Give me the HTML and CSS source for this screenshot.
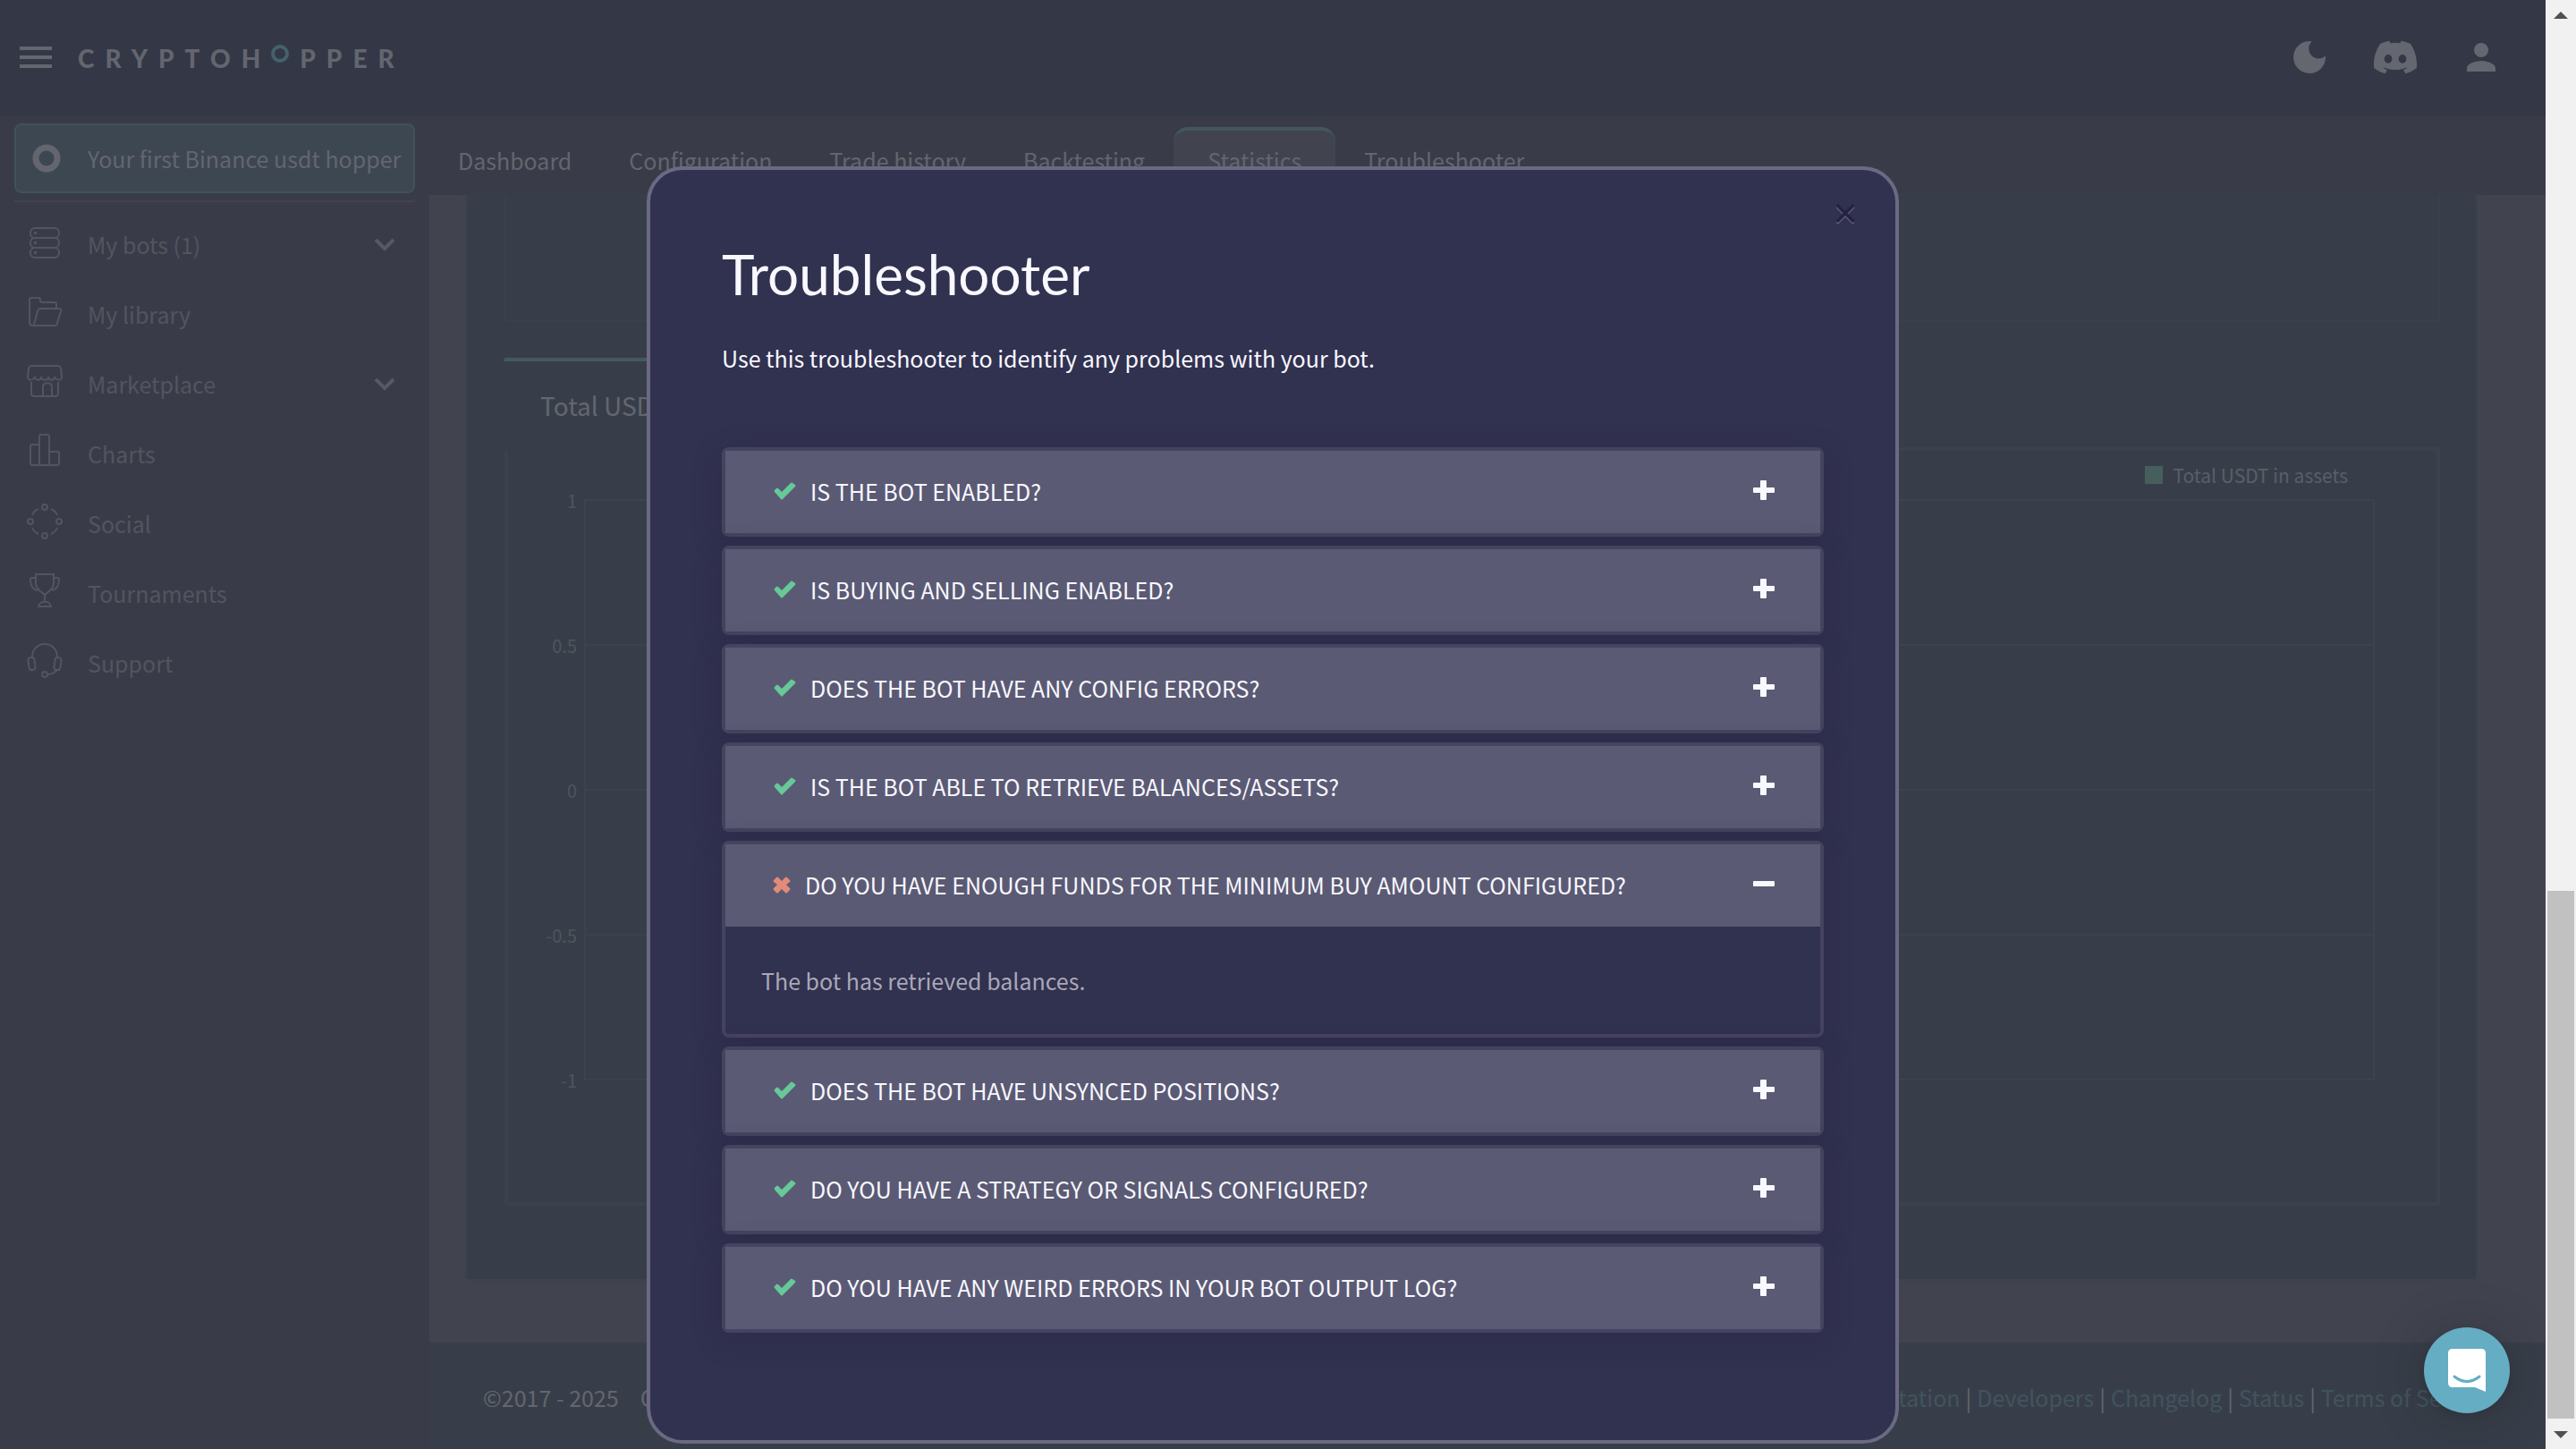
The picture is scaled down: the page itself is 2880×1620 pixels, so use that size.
FILE: index.html
```html
<!DOCTYPE html>
<html lang="en">
<head>
<meta charset="utf-8">
<title>Cryptohopper - Statistics</title>
<link rel="stylesheet" href="styles.css">
</head>
<body>
<header class="topbar">
  <button class="icon-btn menu-btn" aria-label="Menu"><svg width="36" height="24" viewBox="0 0 36 24"><path d="M0 0h36v4H0zM0 10h36v4H0zM0 20h36v4H0z"/></svg></button>
  <a class="logo" href="#">CRYPTOH<svg class="logo-ring" width="20" height="20" viewBox="0 0 20 20" aria-label="O"><circle cx="10" cy="10" r="8"/></svg>PPER</a>
  <div class="top-actions">
    <button class="icon-btn" aria-label="Dark mode"><svg width="48" height="48" viewBox="0 0 48 48"><path d="M26.800 6.200A18 18 0 1 0 42 22.500A11 11 0 1 1 26.800 6.200z"/></svg></button>
    <button class="icon-btn" aria-label="Discord"><svg width="48" height="48" viewBox="0 0 24 24"><path d="M20.317 4.370a19.800 19.800 0 0 0-4.885-1.515.07.07 0 0 0-.079.037c-.21.375-.444.864-.608 1.250a18.300 18.300 0 0 0-5.487 0 12.600 12.600 0 0 0-.617-1.250.08.08 0 0 0-.079-.037A19.700 19.700 0 0 0 3.677 4.370a.07.07 0 0 0-.032.027C.533 9.046-.32 13.580.099 18.057a.08.08 0 0 0 .031.057 19.900 19.900 0 0 0 5.993 3.030.08.08 0 0 0 .084-.028 14 14 0 0 0 1.226-1.994.08.08 0 0 0-.041-.106 13 13 0 0 1-1.872-.892.08.08 0 0 1-.008-.128l.372-.292a.07.07 0 0 1 .077-.01c3.928 1.793 8.180 1.793 12.062 0a.07.07 0 0 1 .078.01l.373.292a.08.08 0 0 1-.006.127 12.300 12.300 0 0 1-1.873.892.08.08 0 0 0-.041.107c.36.698.772 1.362 1.225 1.993a.08.08 0 0 0 .084.028 19.800 19.800 0 0 0 6.002-3.030.08.08 0 0 0 .032-.054c.5-5.177-.838-9.674-3.549-13.660a.06.06 0 0 0-.031-.03zM8.020 15.330c-1.183 0-2.157-1.085-2.157-2.419s.955-2.419 2.157-2.419c1.210 0 2.176 1.096 2.157 2.420 0 1.333-.956 2.418-2.157 2.418zm7.975 0c-1.183 0-2.157-1.085-2.157-2.419s.955-2.419 2.157-2.419c1.210 0 2.176 1.096 2.157 2.420 0 1.333-.946 2.418-2.157 2.418z"/></svg></button>
    <button class="icon-btn" aria-label="Account"><svg width="48" height="48" viewBox="0 0 24 24"><path d="M12 12a4 4 0 1 0 0-8 4 4 0 0 0 0 8zm0 2c-2.670 0-8 1.340-8 4v2h16v-2c0-2.660-5.330-4-8-4z"/></svg></button>
  </div>
</header>

<div class="layout">
  <aside class="sidebar">
    <button class="bot-btn">
      <svg class="side-icon" viewBox="0 0 48 48"><circle cx="26" cy="24" r="12" stroke-width="7"/></svg>
      <span>Your first Binance usdt hopper</span>
    </button>
    <hr class="side-rule">
    <nav class="side-nav">
      <a href="#"><svg class="side-icon" viewBox="0 0 48 48"><rect x="8" y="6" width="32" height="11" rx="5"/><rect x="8" y="17" width="32" height="11" rx="5"/><rect x="8" y="28" width="32" height="11" rx="5"/><path d="M12 11.500h3M12 22.500h3M12 33.500h3" stroke-width="3"/></svg><span>My bots (1)</span><svg class="chevron" viewBox="0 0 24 16"><path d="M2 3l10 10L22 3"/></svg></a>
      <a href="#"><svg class="side-icon" viewBox="0 0 48 48"><path d="M10 37c-2 0-3-1-3-3V8c0-1 1-2 2-2h8c1 0 2 1 2 2v1c0 1 1 2 2 2h14c2 0 2 1 2 2v5M12 36l4-15c1-2 1-3 3-3h21c2 0 3 1 2 3l-4 13c0 2-1 3-3 3H10"/></svg><span>My library</span></a>
      <a href="#"><svg class="side-icon" viewBox="0 0 48 48"><path d="M9 4h30q2 0 3 3l1 9c0 5-6 5-8 0 0 5-7 5-7 0 0 5-8 5-8 0 0 5-7 5-7 0-2 5-8 5-8 0l1-9q1-3 3-3zM9 22v13c0 2 1 3 3 3h24c2 0 3-1 3-3V22M22 38V27c0-5 10-5 10 0v11"/></svg><span>Marketplace</span><svg class="chevron" viewBox="0 0 24 16"><path d="M2 3l10 10L22 3"/></svg></a>
      <a href="#"><svg class="side-icon" viewBox="0 0 48 48"><path d="M18 37V5q0-2 2-2h7q2 0 2 2v32M18 14h-8q-2 0-2 2v19q0 2 2 2h28q2 0 2-2V24q0-2-2-2h-9"/></svg><span>Charts</span></a>
      <a href="#"><svg class="side-icon" viewBox="0 0 48 48"><circle cx="24" cy="6" r="3"/><circle cx="24" cy="38" r="3"/><circle cx="8" cy="22" r="3"/><circle cx="40" cy="22" r="3"/><path d="M31 8q5 2 7 7M17 8q-5 2-7 7M31 36q5-2 7-7M17 36q-5-2-7-7"/></svg><span>Social</span></a>
      <a href="#"><svg class="side-icon" viewBox="0 0 48 48"><path d="M14 3h20v10c0 6-5 9-10 13-5-4-10-7-10-13zM14 7h-4q-2 0-2 2c0 7 3 11 8 12M34 7h4q2 0 2 2c0 7-3 11-8 12M24 26v8M17 39c1-7 13-7 14 0z"/></svg><span>Tournaments</span></a>
      <a href="#"><svg class="side-icon" viewBox="0 0 48 48"><path d="M10 18C10-2 38-2 38 18M38 32c-3 3-6 5-11 5"/><rect x="6" y="18" width="7" height="14" rx="3" transform="rotate(-8 10 25)"/><rect x="35" y="18" width="7" height="14" rx="3" transform="rotate(8 38 25)"/><circle cx="24" cy="37" r="3"/></svg><span>Support</span></a>
    </nav>
  </aside>

  <div class="content">
    <nav class="tabs">
      <a href="#">Dashboard</a>
      <a href="#">Configuration</a>
      <a href="#">Trade history</a>
      <a href="#">Backtesting</a>
      <a href="#" class="active" aria-current="page">Statistics</a>
      <a href="#">Troubleshooter</a>
    </nav>
    <main class="card">
      <section class="panel-end"></section>
      <h2 class="panel-tab">Total USDT in assets</h2>
      <section class="panel">
        <div class="legend"><i></i><span>Total USDT in assets</span></div>
        <div class="plot">
          <div class="axis"><span>1</span><span>0.5</span><span>0</span><span>-0.5</span><span>-1</span></div>
          <div class="grid"><div></div><div></div><div></div><div></div></div>
        </div>
      </section>
    </main>
    <footer class="footer">
      <div class="copyright"><span>©2017 - 2025</span><span>Cryptohopper</span></div>
      <div class="links"><a href="#">Documentation</a><b>|</b><a href="#">Developers</a><b>|</b><a href="#">Changelog</a><b>|</b><a href="#">Status</a><b>|</b><a href="#">Terms of Service</a></div>
    </footer>
  </div>
</div>

<svg class="symbols" aria-hidden="true">
  <symbol id="check" viewBox="0 0 26 20"><path d="M2 9l2-2q1-1 2 0l4 4L20 1q1-1 2 0l3 2q1 1 0 2L11 19q-1 1-2 0L2 11q-1-1 0-2z"/></symbol>
  <symbol id="cross" viewBox="0 0 20 20"><path d="M1 5l3-3q1-1 2 0l4 4 4-4q1-1 2 0l3 3q1 1 0 2l-4 3 4 4q1 1 0 2l-3 3q-1 1-2 0l-4-4-4 4q-1 1-2 0l-3-3q-1-1 0-2l4-4-4-3q-1-1 0-2z"/></symbol>
  <symbol id="plus" viewBox="0 0 24 24"><path d="M8 1q0-1 1-1h5q1 0 1 1v7h8q1 0 1 1v4q0 1-1 1h-8v7q0 1-1 1H9q-1 0-1-1v-7H1q-1 0-1-1V9q0-1 1-1h7z"/></symbol>
  <symbol id="minus" viewBox="0 0 24 24"><rect y="8" width="24" height="6" rx="1"/></symbol>
</svg>

<div class="overlay">
  <div class="modal" role="dialog" aria-labelledby="modal-title">
    <button class="close" aria-label="Close">×</button>
    <h1 id="modal-title">Troubleshooter</h1>
    <p class="intro">Use this troubleshooter to identify any problems with your bot.</p>
    <div class="accordion">
      <div class="item"><button class="question"><svg class="check"><use href="#check"/></svg><span>IS THE BOT ENABLED?</span><svg class="toggle"><use href="#plus"/></svg></button></div>
      <div class="item"><button class="question"><svg class="check"><use href="#check"/></svg><span>IS BUYING AND SELLING ENABLED?</span><svg class="toggle"><use href="#plus"/></svg></button></div>
      <div class="item"><button class="question"><svg class="check"><use href="#check"/></svg><span>DOES THE BOT HAVE ANY CONFIG ERRORS?</span><svg class="toggle"><use href="#plus"/></svg></button></div>
      <div class="item"><button class="question"><svg class="check"><use href="#check"/></svg><span>IS THE BOT ABLE TO RETRIEVE BALANCES/ASSETS?</span><svg class="toggle"><use href="#plus"/></svg></button></div>
      <div class="item"><button class="question" aria-expanded="true"><svg class="cross"><use href="#cross"/></svg><span>DO YOU HAVE ENOUGH FUNDS FOR THE MINIMUM BUY AMOUNT CONFIGURED?</span><svg class="toggle"><use href="#minus"/></svg></button><p class="answer">The bot has retrieved balances.</p></div>
      <div class="item"><button class="question"><svg class="check"><use href="#check"/></svg><span>DOES THE BOT HAVE UNSYNCED POSITIONS?</span><svg class="toggle"><use href="#plus"/></svg></button></div>
      <div class="item"><button class="question"><svg class="check"><use href="#check"/></svg><span>DO YOU HAVE A STRATEGY OR SIGNALS CONFIGURED?</span><svg class="toggle"><use href="#plus"/></svg></button></div>
      <div class="item"><button class="question"><svg class="check"><use href="#check"/></svg><span>DO YOU HAVE ANY WEIRD ERRORS IN YOUR BOT OUTPUT LOG?</span><svg class="toggle"><use href="#plus"/></svg></button></div>
    </div>
  </div>
</div>

<button class="chat" aria-label="Open chat"><svg width="48" height="48" viewBox="0 0 48 48"><path class="bubble" d="M8 0h32q5 0 5 5v43l-12-5H8q-5 0-5-5V5q0-5 5-5z"/><path class="smile" d="M10 31q14 11 28 0"/></svg></button>

<div class="scrollbar" aria-hidden="true">
  <svg viewBox="0 0 34 34"><path d="M9 21l8-8 8 8z"/></svg>
  <div class="track"><div class="thumb"></div></div>
  <svg viewBox="0 0 34 34"><path d="M9 14l8 8 8-8z"/></svg>
</div>
</body>
</html>
```
FILE: styles.css
```css
* { box-sizing: border-box; }

body {
  margin: 0;
  padding-right: 34px;
  min-height: 100vh;
  display: flex;
  flex-direction: column;
  background: #393c48;
  color: #63666f;
  font: 25px/40px "Noto Sans CJK SC", "Noto Sans", sans-serif;
  overflow: hidden;
}

button { font: inherit; color: inherit; background: none; border: 0; padding: 0; cursor: pointer; }
a { color: inherit; text-decoration: none; }
h1, h2, p { margin: 0; font-weight: 400; }
svg { display: block; flex: none; }
.symbols { position: absolute; width: 0; height: 0; }

/* Top bar */
.topbar {
  height: 130px;
  flex: none;
  display: flex;
  align-items: center;
  padding: 0 48px 2px 22px;
  background: #343746;
}
.icon-btn svg { fill: #64676f; }
.menu-btn { margin-right: 29px; }
.logo {
  display: flex;
  align-items: center;
  padding-top: 2px;
  font: 900 28px/32px Lato, sans-serif;
  letter-spacing: 12px;
}
.logo-ring { margin: 0 12px 10px 0; fill: none; stroke: #44616c; stroke-width: 4; }
.top-actions { display: flex; gap: 48px; margin-left: auto; }

/* Layout */
.layout { flex: 1; display: flex; }
.content { flex: 1; min-width: 0; display: flex; flex-direction: column; background: #41444f; }

/* Sidebar */
.sidebar { width: 480px; flex: none; padding: 8px 16px; color: #52555f; }
.bot-btn {
  width: 100%;
  height: 78px;
  display: flex;
  align-items: center;
  gap: 24px;
  padding: 0 8px 0 8px;
  border: 2px solid #3f515c;
  border-radius: 8px;
  background: #3d4752;
  color: #63666f;
  white-space: nowrap;
}
.side-icon { width: 48px; height: 48px; fill: none; stroke: #52555f; stroke-width: 2; }
.bot-btn .side-icon { stroke: #63666f; }
.side-rule { height: 2px; margin: 8px 0; border: 0; background: #40434e; }
.side-nav a { display: flex; align-items: center; gap: 24px; height: 78px; padding: 0 21px 0 10px; }
.chevron { width: 26px; height: 16px; margin-left: auto; fill: none; stroke: #575a64; stroke-width: 4; }

/* Bot tabs */
.tabs {
  height: 88px;
  flex: none;
  display: flex;
  align-items: flex-end;
  background: #393c48;
}
.tabs a { height: 76px; padding: 13px 32px 0; border-top: 4px solid transparent; }
.tabs .active { padding: 13px 38px 0; border-color: #435660; border-radius: 16px 16px 0 0; background: #41444f; }

/* Statistics card */
.card {
  margin: 0 78px 71px 42px;
  padding: 0 40px 82px 42px;
  background: #383e49;
  box-shadow: 0 0 4px #3c404b;
}
.panel-end { height: 142px; border: 2px solid #3b414c; border-top: 0; border-radius: 0 0 4px 4px; }
.panel-tab {
  position: relative;
  width: 420px;
  height: 104px;
  margin: 40px 0 -4px;
  padding: 29px 40px 0;
  border-top: 4px solid #445864;
  background: #383e49;
  font-size: 28px;
  line-height: 40px;
}
.panel { border: 4px solid #3c424d; padding-bottom: 136px; }
.legend {
  display: flex;
  align-items: center;
  justify-content: flex-end;
  gap: 11px;
  height: 54px;
  padding-right: 99px;
  font-size: 21px;
  line-height: 32px;
  color: #5b5e68;
}
.legend i { width: 20px; height: 20px; background: #455f5d; }
.plot { display: flex; margin-right: 69px; }
.axis {
  width: 85px;
  display: flex;
  flex-direction: column;
  justify-content: space-between;
  margin: -14px 0 -16px;
  padding-right: 8px;
  text-align: right;
  font-size: 20px;
  line-height: 32px;
  color: #50545e;
}
.grid { flex: 1; border: solid #3c434b; border-width: 2px 2px 0; }
.grid div { height: 162px; border-bottom: 2px solid #3c434b; }

/* Footer */
.footer {
  flex: 1;
  display: flex;
  justify-content: space-between;
  align-items: center;
  padding: 2px 60px 0;
  background: #383e49;
}
.copyright { display: flex; gap: 24px; }
.links { display: flex; gap: 6px; color: #40545f; }
.links b { font-weight: 400; color: #63666f; }

/* Troubleshooter dialog */
.overlay {
  position: fixed;
  inset: 0 34px 0 0;
  padding-top: 186px;
  display: flex;
  justify-content: center;
  align-items: flex-start;
}
.modal {
  position: relative;
  width: 1400px;
  max-width: 100%;
  padding: 76px 80px 120px;
  border: 4px solid #6b6a82;
  border-radius: 40px;
  background: #313150;
  color: #f8f8ff;
}
.modal h1 { font: 400 62px/80px Lato, sans-serif; }
.intro { margin-top: 34px; }
.close {
  position: absolute;
  top: 27px;
  right: 40px;
  width: 32px;
  font-size: 32px;
  font-weight: 700;
  line-height: 40px;
  color: #232240;
  text-shadow: 0 2px 0 #5a5975;
}
.accordion { display: flex; flex-direction: column; gap: 10px; margin-top: 80px; }
.item {
  border: 4px solid #45435f;
  border-radius: 8px;
  box-shadow: 0 8px 32px rgba(40, 36, 64, .3);
}
.question {
  width: 100%;
  height: 92px;
  display: flex;
  align-items: center;
  gap: 16px;
  padding: 0 51px 2px 53px;
  background: #5b5a74;
  text-align: left;
}
.check { width: 26px; height: 20px; fill: #66c997; }
.cross { width: 20px; height: 20px; fill: #e28b7a; }
.toggle { width: 24px; height: 24px; margin-left: auto; fill: #f8f8ff; }
.answer { padding: 40px; color: #a9a8b6; }

/* Chat launcher */
.chat {
  position: fixed;
  right: 40px;
  bottom: 40px;
  margin-right: 34px;
  width: 96px;
  height: 96px;
  display: grid;
  place-items: center;
  border-radius: 50%;
  background: #65adc3;
  box-shadow: 0 2px 12px rgba(0, 0, 0, .12), 0 4px 64px rgba(0, 0, 0, .2);
}
.bubble { fill: #fff; }
.smile { fill: none; stroke: #65adc3; stroke-width: 3; stroke-linecap: round; }

/* Window scrollbar */
.scrollbar {
  position: fixed;
  inset: 0 0 0 auto;
  width: 34px;
  display: flex;
  flex-direction: column;
  background: #f1f1f1;
}
.scrollbar svg { width: 34px; height: 34px; fill: #505050; }
.track { flex: 1; display: flex; flex-direction: column; justify-content: flex-end; padding: 0 2px; }
.thumb { height: 38%; background: #c1c1c1; }
```
